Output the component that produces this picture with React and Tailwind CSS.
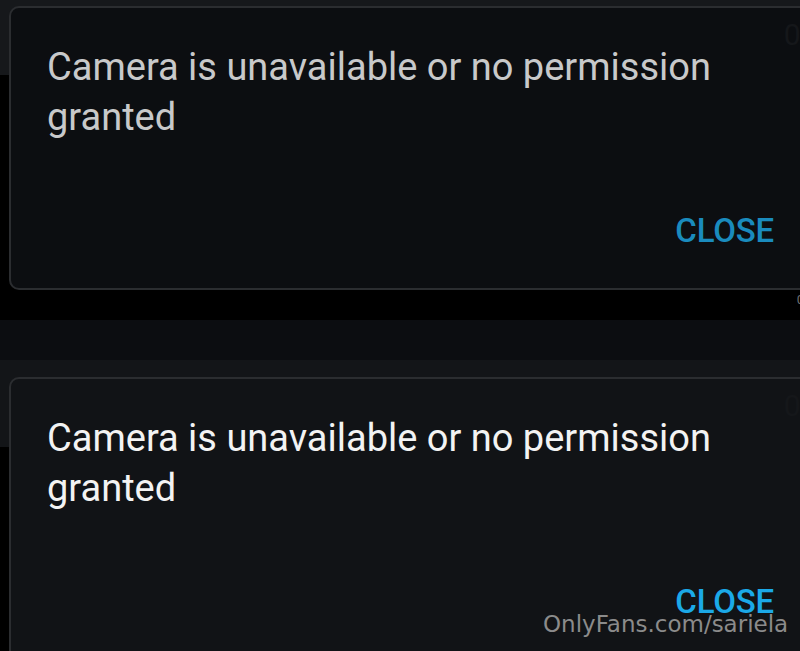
import React from "react";

// Two captures of the same camera-permission dialog stacked on one canvas.
const SHOTS = [
  {
    key: "dim",
    height: "h-[320px]",
    backdrop: "bg-[linear-gradient(#16181b_0_75px,#000_75px)]",
    pad: "pt-[6px]",
    card: "h-[284px] bg-[#0c0e11]",
    text: "text-[#c8c9ca]",
    action: "text-[#1a8bbd]",
    under: true,
  },
  {
    key: "bright",
    height: "h-[331px]",
    backdrop: "bg-[linear-gradient(#0c0d11_0_40px,#131518_40px_127px,#000_127px)]",
    pad: "pt-[57px]",
    card: "h-[320px] bg-[#111316]",
    text: "text-[#f3f3f3]",
    action: "text-[#1ba9e8]",
    under: false,
  },
];

function PermissionDialog({ shot }) {
  return (
    <div
      className={`relative w-[800px] shrink-0 rounded-[10px] border-2 border-[#2b2d30] ${shot.card}`}
    >
      {/* counter from the screen underneath, showing through the dialog */}
      <span className="absolute right-[-6px] top-[12px] text-[30px] leading-none text-[#15171a] font-['Roboto',sans-serif]">
        0/
      </span>
      <div className="flex flex-col pl-[36px] pr-[33px] pt-[34px]">
        <p className={`text-[38px] leading-[50px] font-['Roboto',sans-serif] ${shot.text}`}>
          Camera is unavailable or no permission
          <br />
          granted
        </p>
        <button
          className={`self-end mt-[69px] text-[33px] leading-[40px] font-medium tracking-[-0.2px] font-['Roboto',sans-serif] ${shot.action}`}
        >
          CLOSE
        </button>
      </div>
    </div>
  );
}

export default function App() {
  return (
    <div className="relative w-[800px] h-[651px] overflow-hidden bg-black">
      {SHOTS.map((shot) => (
        <section
          key={shot.key}
          className={`relative flex pl-[9px] ${shot.height} ${shot.backdrop} ${shot.pad}`}
        >
          <PermissionDialog shot={shot} />
          {shot.under && (
            <span className="absolute right-[-4px] top-[290px] text-[13px] text-[#6d6e70] font-['Roboto',sans-serif]">
              0
            </span>
          )}
        </section>
      ))}
      <span className="absolute left-[543px] top-[613px] text-[23px] leading-none text-[#8b8b8b] font-['DejaVu_Sans',sans-serif]">
        OnlyFans.com/sariela
      </span>
    </div>
  );
}
